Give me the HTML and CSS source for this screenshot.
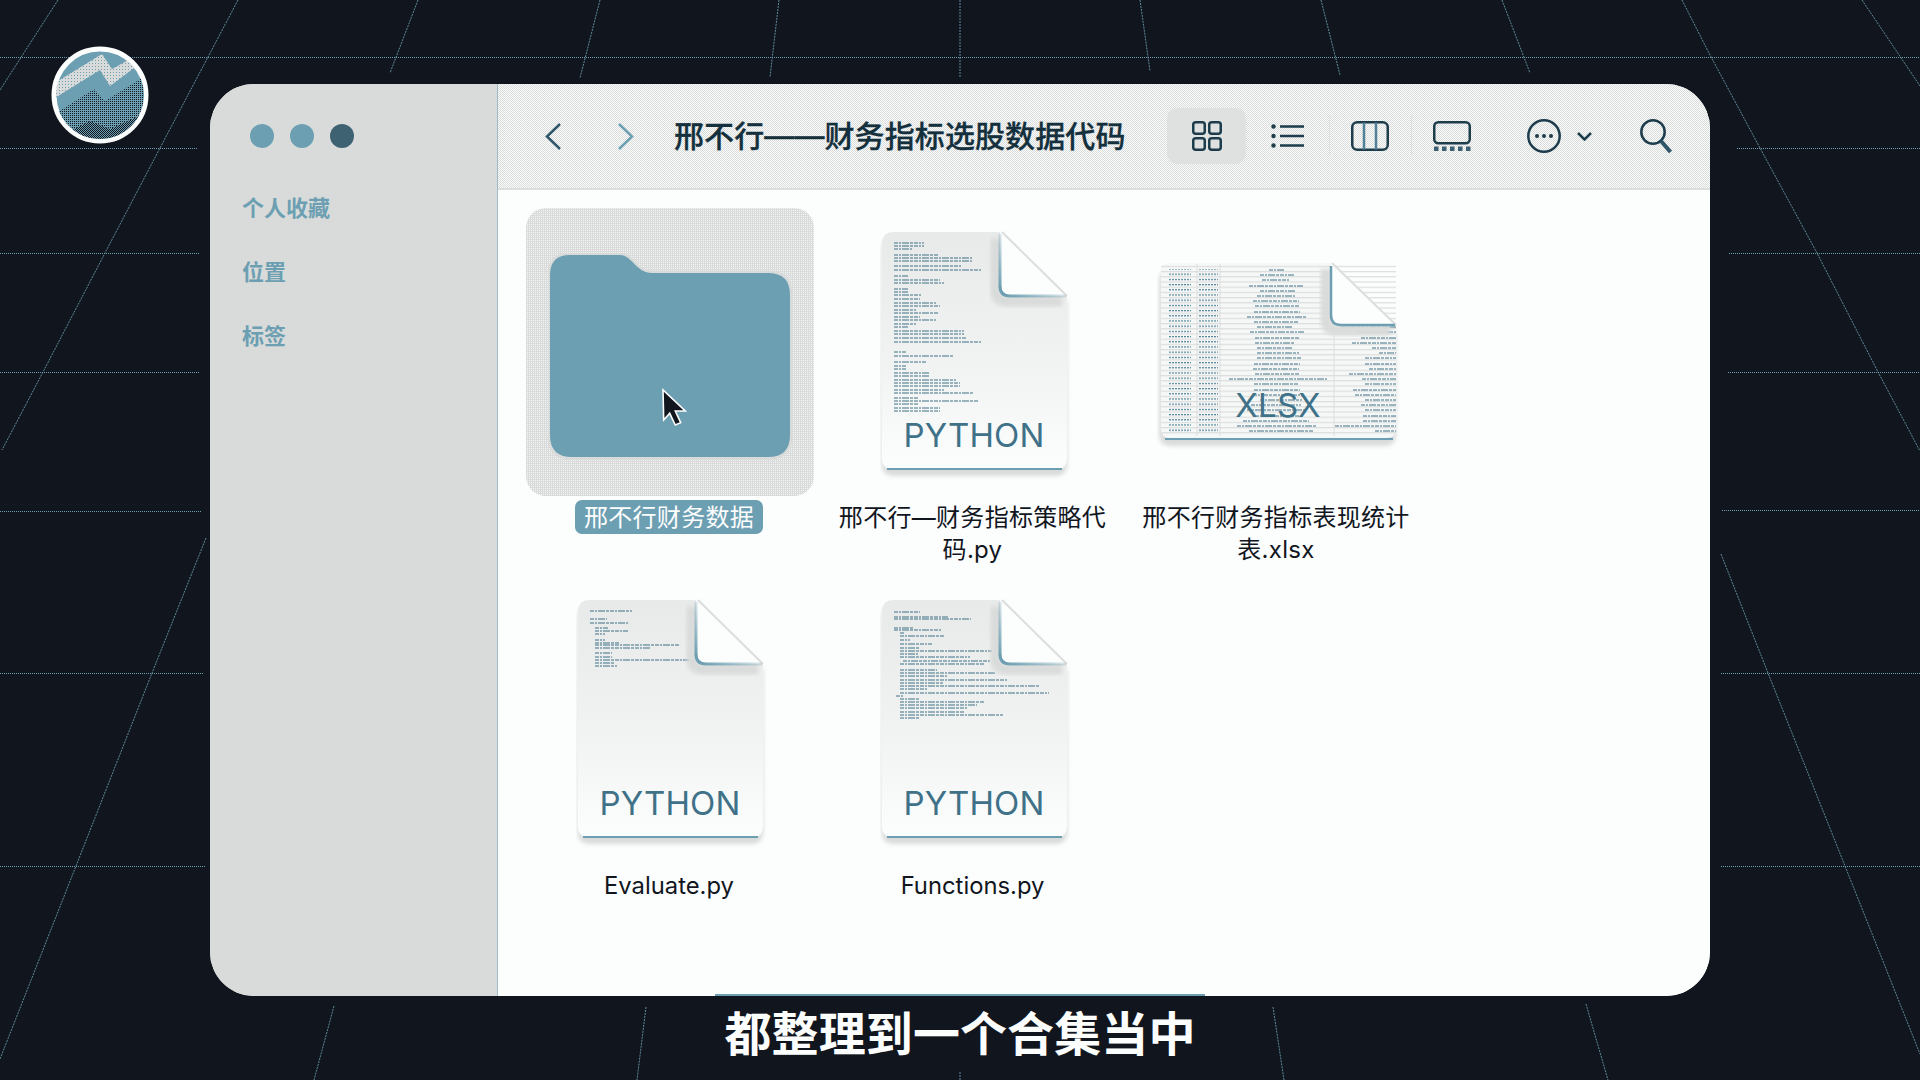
FILE: index.html
```html
<!DOCTYPE html>
<html lang="zh-CN">
<head>
<meta charset="utf-8">
<title>邢不行——财务指标选股数据代码</title>
<link rel="stylesheet" href="styles.css">
</head>
<body>
<svg class="defs" aria-hidden="true">
  <defs>
    <linearGradient id="paper" x1="0" y1="0" x2="0" y2="1">
      <stop offset="0" stop-color="#e8e9e9"/>
      <stop offset="0.55" stop-color="#f1f2f2"/>
      <stop offset="1" stop-color="#fcfdfd"/>
    </linearGradient>
    <linearGradient id="fadeV" gradientUnits="userSpaceOnUse" x1="0" y1="6" x2="0" y2="60">
      <stop offset="0" stop-color="#6d9fb2" stop-opacity=".25"/>
      <stop offset="1" stop-color="#6d9fb2"/>
    </linearGradient>
    <linearGradient id="fadeH" gradientUnits="userSpaceOnUse" x1="125" y1="0" x2="186" y2="0">
      <stop offset="0" stop-color="#6d9fb2"/>
      <stop offset="1" stop-color="#6d9fb2" stop-opacity=".25"/>
    </linearGradient>
    <filter id="soft" x="-10%" y="-10%" width="120%" height="120%">
      <feGaussianBlur stdDeviation="2"/>
    </filter>
    <pattern id="rows" width="10" height="5.2" patternUnits="userSpaceOnUse">
      <rect y="2.6" width="10" height="1.2" fill="#dcdedd"/>
    </pattern>
    <pattern id="cells" width="3" height="5.2" patternUnits="userSpaceOnUse">
      <rect width="2" height="1.2" fill="#4f8298"/>
    </pattern>
    <pattern id="dither" width="2" height="2" patternUnits="userSpaceOnUse">
      <rect width="2" height="2" fill="#6d9fb2"/>
      <rect width="1" height="1" fill="#11161e"/>
    </pattern>
    <pattern id="ditherdark" width="2" height="2" patternUnits="userSpaceOnUse">
      <rect width="2" height="2" fill="#11161e"/>
      <rect width="1" height="1" fill="#6d9fb2"/>
      <rect x="1" y="1" width="1" height="1" fill="#6d9fb2"/>
    </pattern>
    <pattern id="dotslight" width="3" height="3" patternUnits="userSpaceOnUse">
      <rect width="3" height="3" fill="#d9dbda"/>
      <rect width="1" height="1" fill="#6d9fb2"/>
    </pattern>
    <g id="doc-body">
      <path d="M14 10H122L187 74V236Q187 248 175 248H14Q2 248 2 236V22Q2 10 14 10Z" fill="#d9dbda" filter="url(#soft)"/>
      <path d="M14 4H122L187 68V230Q187 242 175 242H14Q2 242 2 230V16Q2 4 14 4Z" fill="url(#paper)"/>
      <path d="M7 241H182" stroke="#6d9fb2" stroke-width="2"/>
    </g>
    <g id="doc-fold">
      <path d="M120 6V58Q120 68 130 68H186" transform="translate(-4 5)" fill="none" stroke="#d9dbda" stroke-width="11" filter="url(#soft)"/>
      <path d="M122 4L187 68H130Q120 68 120 58V4Z" fill="#fcfdfd"/>
      <path d="M122 4L187 68" stroke="#dcdedd" stroke-width="2"/>
      <path d="M120 6V59" fill="none" stroke="url(#fadeV)" stroke-width="3"/>
      <path d="M120 58Q120 68 130 68H186" fill="none" stroke="url(#fadeH)" stroke-width="3"/>
    </g>
  </defs>
</svg>

<div class="stage">
  <svg class="bg-grid" viewBox="0 0 1920 1080" aria-hidden="true">
    <path class="grid-h" d="M0 57H1920M0 148H198M0 253H199M0 372.500H199M0 511H202M0 673H203M0 866H206M1737 148H1920M1729 253H1920M1728 372.500H1920M1722 510.500H1920M1721 673.500H1920M1721 866H1920"/>
    <path class="grid-d" d="M58 0L0 90M238 0L208 57L160 148L105 253L43 372L2 450M206 538L152 673L76 866L0 1059M334 1006L314 1080M418 0L390 73M600 0L580 78M779 0L770 77M960 0V78M1140 0L1150 71M1321 0L1340 75M1502 0L1530 73M1682 0L1710 55L1760 148L1817 253L1878 372L1920 451M1721 554L1768 673L1845 866L1920 1054M1862 0L1920 86M1586 1004L1608 1080M646 1007L637 1080M1273 1007L1284 1080M960 1072V1080"/>
  </svg>

  <svg class="avatar" viewBox="0 0 100 100" aria-hidden="true">
    <clipPath id="disc"><circle cx="50" cy="50" r="44"/></clipPath>
    <circle cx="50" cy="50" r="46" fill="#6d9fb2" stroke="#fcfdfd" stroke-width="5"/>
    <g clip-path="url(#disc)">
      <path d="M0 41L52 9L62 24L100 3V11L60 41L50 25L0 56Z" fill="url(#dotslight)"/>
      <path d="M0 72L44 44L55 56L100 28V100H0Z" fill="url(#dither)"/>
      <path d="M0 96L40 76L60 84L100 66V100H0Z" fill="url(#ditherdark)"/>
    </g>
  </svg>

  <div class="window">
    <aside class="sidebar">
      <div class="lights">
        <span class="light"></span>
        <span class="light"></span>
        <span class="light light-dark"></span>
      </div>
      <div class="side-item">个人收藏</div>
      <div class="side-item">位置</div>
      <div class="side-item">标签</div>
    </aside>

    <main class="finder">
      <header class="toolbar">
        <svg class="ic-nav" viewBox="0 0 16 27"><path class="st-dark" d="M15 1L2 13.500L15 26"/></svg>
        <svg class="ic-nav ic-forward" viewBox="0 0 16 27"><path class="st-teal" d="M1 1L14 13.500L1 26"/></svg>
        <h1 class="title">邢不行——财务指标选股数据代码</h1>
        <div class="tools">
          <div class="view-active">
            <svg class="ic-grid" viewBox="0 0 30 30"><g class="st-ink"><rect x="1.250" y="1.250" width="11.500" height="11.500" rx="2.500"/><rect x="17.250" y="1.250" width="11.500" height="11.500" rx="2.500"/><rect x="1.250" y="17.250" width="11.500" height="11.500" rx="2.500"/><rect x="17.250" y="17.250" width="11.500" height="11.500" rx="2.500"/></g></svg>
          </div>
          <svg class="ic-list" viewBox="0 0 33 24"><path class="st-ink" d="M9 2.500H33M9 12H33M9 21.500H33"/><g class="fl-ink"><circle cx="2.500" cy="2.500" r="2.200"/><circle cx="2.500" cy="12" r="2.200"/><circle cx="2.500" cy="21.500" r="2.200"/></g></svg>
          <span class="sep"></span>
          <svg class="ic-cols" viewBox="0 0 38 30"><rect class="st-ink" x="1.250" y="1.250" width="35.500" height="27.500" rx="5"/><path class="st-mid" d="M13 1.500V28.500M25 1.500V28.500"/></svg>
          <span class="sep"></span>
          <svg class="ic-gallery" viewBox="0 0 38 30"><rect class="st-ink" x="1.250" y="1.250" width="35.500" height="21" rx="4"/><g class="fl-mid"><rect x="1" y="25.500" width="4.500" height="4.500"/><rect x="9" y="25.500" width="4.500" height="4.500"/><rect x="17" y="25.500" width="4.500" height="4.500"/><rect x="25" y="25.500" width="4.500" height="4.500"/><rect x="33" y="25.500" width="4.500" height="4.500"/></g></svg>
          <svg class="ic-more" viewBox="0 0 34 34"><circle class="st-ink" cx="17" cy="17" r="15.700"/><g class="fl-ink"><circle cx="10" cy="17" r="2"/><circle cx="17" cy="17" r="2"/><circle cx="24" cy="17" r="2"/></g></svg>
          <svg class="ic-chev" viewBox="0 0 15 9"><path class="st-ink" d="M1 1L7.500 7.500L14 1"/></svg>
          <svg class="ic-search" viewBox="0 0 32 34"><circle class="st-ink" cx="13" cy="13" r="11.700"/><path class="st-thick" d="M21 22L30.500 33"/></svg>
        </div>
      </header>

      <section class="files">
        <article class="file">
          <div class="thumb thumb-selected">
            <svg class="folder" viewBox="0 0 244 206"><path class="folder-shape" d="M2 22Q2 2 22 2H72C84 2 88 20 104 20H220Q242 20 242 42V182Q242 204 220 204H24Q2 204 2 182Z"/></svg>
          </div>
          <div class="label label-cjk label-selected">邢不行财务数据</div>
          <svg class="pointer" viewBox="0 0 26 39"><path d="M2 2L2.700 32L8.700 25.300L14.300 37L19.700 34.700L14.300 23L24.300 23Z" fill="#11161e" stroke="#fcfdfd" stroke-width="1.600"/></svg>
        </article>

        <article class="file">
          <div class="thumb">
            <svg class="doc" viewBox="0 0 192 252">
              <use href="#doc-body"/>
              <path class="code" d="M14 15h30M14 18h30M14 21h18M14 27h44M14 30h78M14 33h78M14 38h68M14 42h88M14 48h14M14 52h46M14 55h50M14 61h14M14 64h14M14 67h28M14 71h26M14 75h42M14 78h46M14 82h22M14 85h44M14 89h26M14 92h42M14 96h22M14 99h14M14 103h70M14 106h70M14 110h72M14 114h88M14 124h12M14 128h60M14 134h32M14 138h12M14 141h12M14 145h36M14 148h36M14 152h62M14 155h66M14 158h66M14 162h50M14 165h80M14 170h24M14 173h84M14 176h24M14 180h46M14 183h46"/>
              <use href="#doc-fold"/>
              <text class="kind" x="94" y="219">PYTHON</text>
            </svg>
          </div>
          <div class="label label-cjk">邢不行—财务指标策略代码.py</div>
        </article>

        <article class="file">
          <div class="thumb">
            <svg class="doc-wide" viewBox="0 0 244 192">
              <path d="M14 12H174L239 74V176Q239 188 227 188H14Q2 188 2 176V24Q2 12 14 12Z" fill="#d9dbda" filter="url(#soft)"/>
              <path d="M12 5H174L239 67V170Q239 180 229 180H12Q4 180 4 170V13Q4 5 12 5Z" fill="#f6f7f7"/>
              <path d="M8 181H236" stroke="#6d9fb2" stroke-width="2"/>
              <rect x="4" y="6" width="235" height="172" fill="url(#rows)"/>
              <path d="M40 6V178M63 6V178M177 68V178" stroke="#dcdedd"/>
              <rect x="12" y="11" width="22" height="164" fill="url(#cells)"/>
              <rect x="41" y="11" width="20" height="164" fill="url(#cells)"/>
              <path class="code" d="M112 12h16M103 17h34M105 22h28M92 28h54M103 33h36M100 38h38M96 43h46M98 48h44M97 54h46M90 59h60M97 64h44M100 69h36M93 74h54M98 80h44M98 85h40M100 90h36M100 95h42M100 100h44M97 106h46M96 111h46M98 116h44M72 121h98M97 126h44M97 132h46M96 137h50M103 142h42M94 147h50M90 152h58M98 158h44M86 163h66M80 168h80M92 173h64"/>
              <path class="code" d="M184 69h55M201 74h38M204 80h35M195 85h44M215 90h24M222 95h17M208 100h31M208 106h31M212 111h27M192 116h47M205 121h34M208 126h31M196 132h43M198 137h41M208 142h31M204 147h35M208 152h31M206 158h33M206 163h33M178 168h61M218 173h21"/>
              <path d="M174 6V57Q174 67 184 67H238" transform="translate(-5 5)" fill="none" stroke="#d9dbda" stroke-width="11" filter="url(#soft)"/>
              <path d="M175 5L239 67H184Q174 67 174 57V5Z" fill="#fcfdfd"/>
              <path d="M175 5L239 67" stroke="#dcdedd" stroke-width="2"/>
              <path d="M174 8V57Q174 67 184 67H238" fill="none" stroke="#6d9fb2" stroke-width="2.500"/>
              <text class="kind" x="121" y="159">XLSX</text>
            </svg>
          </div>
          <div class="label label-cjk">邢不行财务指标表现统计表.xlsx</div>
        </article>

        <article class="file">
          <div class="thumb">
            <svg class="doc" viewBox="0 0 192 252">
              <use href="#doc-body"/>
              <path class="code" d="M14 15h42M14 23h17M14 27h38M19 32h13M19 35h33M19 38h10M19 44h10M19 47h25M19 49h85M19 52h55M19 57h17M19 61h17M19 64h102M19 67h20M19 70h22"/>
              <use href="#doc-fold"/>
              <text class="kind" x="94" y="219">PYTHON</text>
            </svg>
          </div>
          <div class="label label-latin">Evaluate.py</div>
        </article>

        <article class="file">
          <div class="thumb">
            <svg class="doc" viewBox="0 0 192 252">
              <use href="#doc-body"/>
              <path class="code" d="M14 16h26M14 21h54M14 23h77M14 32h19M14 34h47M20 37h4M20 40h45M20 44h10M20 48h32M20 52h20M20 55h92M20 58h18M20 61h70M23 65h87M20 68h85M20 74h37M20 77h96M20 80h48M20 84h107M20 87h43M20 90h140M20 93h27M20 97h149M16 100h7M20 103h20M20 106h85M20 109h77M20 112h68M20 116h65M20 119h103M20 122h20"/>
              <use href="#doc-fold"/>
              <text class="kind" x="94" y="219">PYTHON</text>
            </svg>
          </div>
          <div class="label label-latin">Functions.py</div>
        </article>
      </section>
    </main>
    <span class="edge-glow"></span>
  </div>

  <p class="caption">都整理到一个合集当中</p>
</div>
</body>
</html>
```
FILE: styles.css
```css
html, body {
  margin: 0;
  padding: 0;
  background: #11161e;
}

.defs {
  display: block;
  width: 0;
  height: 0;
  overflow: hidden;
}

.stage {
  position: relative;
  width: 1920px;
  height: 1080px;
  box-sizing: border-box;
  padding-top: 84px;
  display: flex;
  flex-direction: column;
  align-items: center;
  overflow: hidden;
  background: #11161e;
  font-family: Inter, "Noto Sans CJK SC", sans-serif;
  color: #11161e;
}

.bg-grid {
  position: absolute;
  inset: 0;
  width: 1920px;
  height: 1080px;
}

.grid-h,
.grid-d {
  fill: none;
  stroke: #6d9fb2;
  stroke-width: 1;
}

.grid-h {
  shape-rendering: crispEdges;
  stroke-dasharray: 1 1;
}

.grid-d {
  stroke-dasharray: 2 1;
  opacity: .85;
}

.avatar {
  position: absolute;
  left: 50px;
  top: 45px;
  width: 100px;
  height: 100px;
}

.window {
  position: relative;
  width: 1500px;
  height: 912px;
  flex: none;
  display: flex;
  border-radius: 44px;
  overflow: hidden;
  background: #fcfdfd;
}

.sidebar {
  width: 288px;
  flex: none;
  box-sizing: border-box;
  padding: 40px 0 0 32px;
  background: #d9dbda;
  border-right: 1px solid #9dbcc8;
}

.lights {
  display: flex;
  gap: 16px;
  margin: 0 0 28px 8px;
}

.light {
  width: 24px;
  height: 24px;
  border-radius: 50%;
  background: #6d9fb2;
}

.light-dark {
  background: #3f6272;
}

.side-item {
  height: 64px;
  line-height: 64px;
  font-size: 22px;
  font-weight: 700;
  color: #6d9fb2;
}

.finder {
  flex: 1;
  min-width: 0;
  display: flex;
  flex-direction: column;
}

.toolbar {
  height: 106px;
  flex: none;
  box-sizing: border-box;
  display: flex;
  align-items: center;
  padding: 0 38px 0 47px;
  background: repeating-conic-gradient(#fcfdfd 0 25%, #d9dbda 0 50%) 0 0 / 2px 2px;
  border-bottom: 2px solid #dcdedd;
}

.ic-nav {
  width: 16px;
  height: 27px;
  flex: none;
}

.ic-forward {
  margin-left: 57px;
}

.st-dark,
.st-teal,
.st-thick,
.st-mid {
  fill: none;
  stroke-width: 2.500;
}

.st-dark {
  stroke: #2f5668;
}

.st-teal {
  stroke: #6d9fb2;
}

.st-mid {
  stroke: #4f8298;
}

.st-ink,
.st-ink * {
  fill: none;
  stroke: #1d3d4c;
  stroke-width: 2.500;
}

.st-thick {
  stroke: #2f5668;
  stroke-width: 4;
}

.fl-ink {
  fill: #1d3d4c;
}

.fl-mid {
  fill: #3a6072;
}

.title {
  margin: 0 0 0 40px;
  font-size: 30px;
  line-height: 40px;
  font-weight: 500;
  letter-spacing: .1px;
  -webkit-text-stroke: .3px #14303d;
  color: #14303d;
  white-space: nowrap;
}

.tools {
  margin-left: auto;
  display: flex;
  align-items: center;
}

.view-active {
  width: 79px;
  height: 56px;
  display: flex;
  align-items: center;
  justify-content: center;
  border-radius: 10px;
  background: #dfe1e0;
}

.ic-grid {
  width: 30px;
  height: 30px;
}

.ic-list {
  width: 33px;
  height: 24px;
  margin-left: 25px;
}

.sep {
  width: 1px;
  height: 40px;
  margin-left: 25px;
  background: #dfe1e0;
}

.sep + .ic-cols {
  margin-left: 21px;
}

.ic-cols {
  width: 38px;
  height: 30px;
}

.ic-cols + .sep {
  margin-left: 22px;
}

.ic-gallery {
  width: 38px;
  height: 30px;
  margin-left: 21px;
}

.ic-more {
  width: 34px;
  height: 34px;
  margin-left: 56px;
}

.ic-chev {
  width: 15px;
  height: 9px;
  margin-left: 16px;
}

.ic-search {
  width: 32px;
  height: 34px;
  margin-left: 48px;
}

.files {
  flex: 1;
  box-sizing: border-box;
  padding: 18px 0 0 28px;
  display: grid;
  grid-template-columns: repeat(3, 288px);
  column-gap: 15.500px;
  row-gap: 10px;
  align-content: start;
  background: #fcfdfd;
}

.file {
  position: relative;
  height: 358px;
  display: flex;
  flex-direction: column;
  align-items: center;
}

.thumb {
  width: 288px;
  height: 288px;
  flex: none;
  display: flex;
  align-items: center;
  justify-content: center;
  border-radius: 20px;
}

.thumb-selected {
  background: repeating-conic-gradient(#f4f5f5 0 25%, #d9dbda 0 100%) 0 0 / 2px 2px;
}

.folder {
  width: 244px;
  height: 206px;
  margin-top: 8px;
}

.folder-shape {
  fill: #6d9fb2;
  stroke: #d9dbda;
  stroke-width: 5;
  paint-order: stroke;
}

.doc {
  width: 192px;
  height: 252px;
  margin: 4px 0 0 4px;
}

.doc-wide {
  width: 244px;
  height: 192px;
  margin: 4px 0 0 4px;
}

.code {
  fill: none;
  stroke: #3f7288;
  stroke-width: 1.200;
  stroke-dasharray: 4 1 2 1 7 1 3 1;
}

.kind {
  font-family: Inter, sans-serif;
  font-size: 33px;
  letter-spacing: .2px;
  text-anchor: middle;
  fill: #3f7288;
}

.label {
  max-width: 272px;
  margin: 6px 2px 0 0;
  font-size: 24px;
  line-height: 32px;
  text-align: center;
  color: #11161e;
}

.label-cjk {
  letter-spacing: .3px;
}

.label-latin {
  font-size: 23.800px;
}

.label-selected {
  margin-top: 4px;
  padding: 2px 9px 0;
  height: 32px;
  border-radius: 7px;
  background: #6d9fb2;
  color: #fcfdfd;
}

.pointer {
  position: absolute;
  left: 135px;
  top: 180px;
  width: 26px;
  height: 39px;
}

.edge-glow {
  position: absolute;
  left: 505px;
  bottom: 0;
  width: 490px;
  height: 2px;
  background: #6d9fb2;
}

.caption {
  margin: 0;
  font-size: 47px;
  line-height: 76px;
  font-weight: 700;
  letter-spacing: .1px;
  color: #fcfdfd;
}
```
